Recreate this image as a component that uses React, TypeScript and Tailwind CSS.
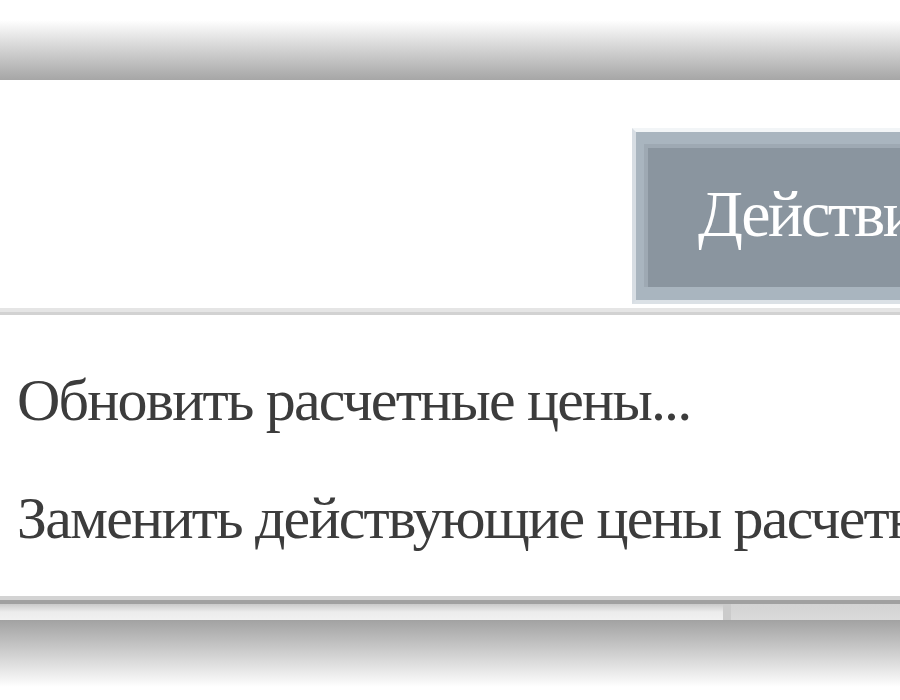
const menuItems = ["Обновить расчетные цены...", "Заменить действующие цены расчетными..."];

export default function App() {
  return (
    <div
      className="flex h-[700px] w-[900px] flex-col overflow-hidden bg-white"
      style={{ fontFamily: '"Liberation Serif", "Times New Roman", serif' }}
    >
      {/* shadow of the window above */}
      <div className="h-[20px] shrink-0 bg-white" />
      <div className="h-[60px] shrink-0 bg-linear-to-b from-white to-[#a6a6a6]" />

      {/* panel */}
      <div className="flex h-[516px] shrink-0 flex-col bg-white">
        <div className="h-[228px] shrink-0 pl-[632px] pt-[48px]">
          <div className="border-b-4 border-l-4 border-t-4 border-b-[#dbe1e6] border-l-[#d7dde3] border-t-[#f2f5f7] bg-[#a9b5bf] pb-[13px] pl-2 pt-3">
            <div className="h-[143px] whitespace-nowrap border-l-4 border-t-4 border-[#9ea9b3] bg-[#8a959f] pl-[50px] text-[66px] leading-[131px] tracking-[-2.5px] text-white">
              Действия
            </div>
          </div>
        </div>

        <div className="h-[4px] shrink-0 bg-[#e5e5e5]" />
        <div className="h-[3px] shrink-0 bg-[#d2d2d2]" />

        <div className="flex flex-col pt-[26px]">
          {menuItems.map((item) => (
            <div
              key={item}
              className="h-[118px] whitespace-nowrap pl-[17px] text-[60px] leading-[118px] tracking-[-1.8px] text-[#3c3c3c]"
            >
              {item}
            </div>
          ))}
        </div>
      </div>

      {/* bottom frame */}
      <div className="h-[4px] shrink-0 bg-[#d3d3d3]" />
      <div className="h-[4px] shrink-0 bg-[#a0a0a0]" />
      <div className="flex h-[16px] shrink-0">
        <div className="w-[723px] bg-linear-to-b from-[#cacaca] via-[#ececec] to-[#f1f1f1]" />
        <div className="w-[8px] bg-[#cbcbcb]" />
        <div className="flex-1 bg-linear-to-b from-[#d3d3d3] to-[#dadada]" />
      </div>
      <div className="h-[67px] shrink-0 bg-linear-to-b from-[#a2a2a2] to-white" />
    </div>
  );
}
